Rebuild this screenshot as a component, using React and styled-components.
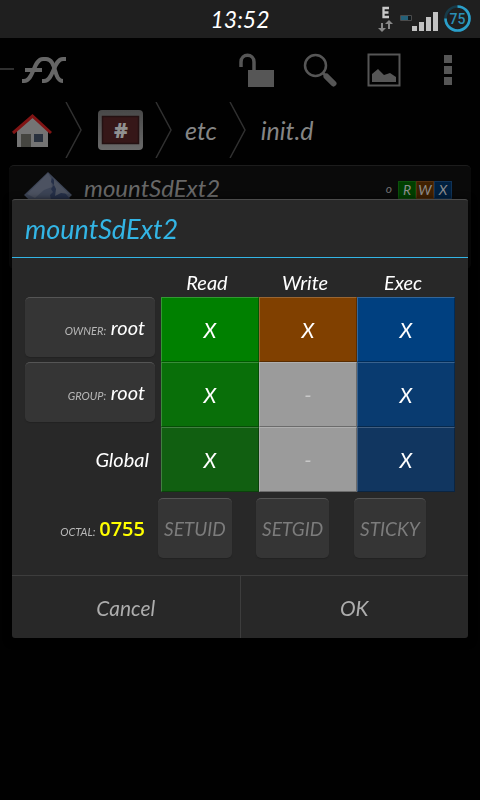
import React, { useState } from 'react';
import styled, { createGlobalStyle } from 'styled-components';

const GlobalStyle = createGlobalStyle`
  * {
    box-sizing: border-box;
  }
  body {
    margin: 0;
    background-color: #010101;
    color: white;
    font-family: Lato, 'Open Sans', sans-serif;
    font-style: italic;
  }
  button {
    margin: 0;
    padding: 0;
    border: 0;
    color: inherit;
    background: none;
    font: inherit;
  }
`;

const StatusBar = styled.header`
  position: relative;
  display: flex;
  align-items: center;
  justify-content: flex-end;
  height: 38px;
  padding-right: 8px;
  background-color: #1f1f1f;
`;

const Clock = styled.time`
  position: absolute;
  left: 0;
  right: 0;
  text-align: center;
  font-size: 23px;
  line-height: 36px;
`;

const Toolbar = styled.nav`
  display: flex;
  align-items: center;
  justify-content: space-between;
  height: 64px;
`;

const Tools = styled.div`
  display: flex;
  align-items: center;
`;

const ToolButton = styled.button`
  display: flex;
  justify-content: center;
  width: 64px;
  color: #565656;
`;

const Breadcrumbs = styled.nav`
  display: flex;
  align-items: center;
  height: 56px;
  padding-left: 12px;
`;

const Crumb = styled.a`
  display: flex;
  justify-content: center;
  padding: 0 ${(props) => props.$gap || 12}px;
  color: #858585;
  font-size: 25px;
  text-decoration: none;
  &:first-child {
    padding-left: 0;
  }
`;

const FileCard = styled.article`
  display: flex;
  align-items: flex-start;
  height: 104px;
  margin: 7px 9px;
  padding: 6px 19px 0 15px;
  border-top: 1px solid #1c1c1c;
  border-radius: 5px;
  background-color: #0a0a0a;
`;

const FileName = styled.span`
  flex: 1;
  padding-left: 12px;
  color: #686868;
  font-size: 24px;
  line-height: 32px;
`;

const FileOwner = styled.span`
  padding-right: 6px;
  color: #707070;
  font-size: 12px;
  line-height: 34px;
`;

const Flag = styled.span`
  width: 18px;
  height: 18px;
  margin-top: 9px;
  border: 1px solid ${(props) => props.$edge};
  background-color: ${(props) => props.$color};
  color: #8c8c8c;
  font-size: 14px;
  line-height: 15px;
  text-align: center;
`;

const ModalLayer = styled.div`
  position: fixed;
  top: 38px;
  right: 0;
  bottom: 0;
  left: 0;
  display: flex;
  align-items: center;
  padding: 0 12px 1px;
`;

const Dialog = styled.section`
  width: 100%;
  border-top: 1px solid #4b4b4b;
  border-radius: 3px;
  background-color: #282828;
  box-shadow: 0 2px 8px black;
`;

const Title = styled.h1`
  margin: 0;
  padding: 0 13px;
  border-bottom: 1px solid #33b5e5;
  color: #33b5e5;
  font-size: 27px;
  font-weight: 400;
  line-height: 57px;
`;

const Permissions = styled.table`
  width: calc(100% - 26px);
  margin: 0 13px;
  border-collapse: collapse;
  table-layout: fixed;
`;

const LabelColumn = styled.col`
  width: 136px;
`;

const Cell = styled.td`
  padding: 0;
`;

const ColumnHead = styled.th`
  height: 39px;
  padding: 8px 6px 0 0;
  font-size: 20px;
  font-weight: 400;
`;

const RowHead = styled.th`
  height: 65px;
  padding: 0;
  font-size: 20px;
  font-weight: 400;
  text-align: right;
  vertical-align: top;
`;

const GlobalLabel = styled.span`
  padding-right: 12px;
  line-height: 65px;
`;

const raised = `
  height: 60px;
  border-top: 1px solid #555;
  border-radius: 5px;
  background-color: #353535;
  box-shadow: 0 1px 1px #222;
`;

const PrincipalButton = styled.button`
  ${raised}
  display: block;
  width: 130px;
  padding: 0 10px 2px 0;
  text-align: right;
`;

const Caption = styled.small`
  color: #b8b8b8;
  font-size: 11px;
`;

const Toggle = styled.button`
  display: block;
  width: 100%;
  height: 65px;
  border: 1px solid;
  border-color: rgba(255, 255, 255, 0.2) rgba(0, 0, 0, 0.3) rgba(0, 0, 0, 0.3)
    rgba(255, 255, 255, 0.2);
  background-color: ${(props) => (props.$on ? props.$color : '#9b9b9b')};
  color: ${(props) => (props.$on ? 'white' : '#c8c8c8')};
  font-size: 21px;
`;

const SpecialRow = styled.div`
  display: grid;
  grid-template-columns: 133px repeat(3, 1fr);
  align-items: center;
  justify-items: start;
  padding: 6px 16px 17px 13px;
`;

const Octal = styled.span`
  justify-self: end;
  padding-right: 13px;
`;

const OctalValue = styled.output`
  color: yellow;
  font-family: 'Open Sans', sans-serif;
  font-size: 20px;
  font-style: normal;
  font-weight: 600;
`;

const SpecialButton = styled.button`
  ${raised}
  padding: 0 6px;
  color: #7c7c7c;
  font-size: 19px;
`;

const Actions = styled.footer`
  display: flex;
  border-top: 1px solid #3d3d3d;
`;

const ActionButton = styled.button`
  flex: 1;
  height: 62px;
  color: #adadad;
  font-size: 21px;
  & + & {
    border-left: 1px solid #3d3d3d;
  }
`;

const StatusIcons = () => (
  <svg width="94" height="36" viewBox="378 1 94 36" aria-hidden="true">
    <path d="M389 8h-5.500v9h5.500M383 12.500h5.500" fill="none" stroke="#c9c9c9" strokeWidth="2.300" />
    <path d="M381 23h2v5h3l-4 4-4-4h3zM388 29h2v-5h3l-4-4-4 4h3z" fill="#888" />
    <path d="M400.500 15.500h11v5h-11z" fill="#10181c" stroke="#4b4b4b" />
    <path d="M401 16h7v4h-7z" fill="#246078" />
    <path d="M412 26h5v5h-5zM419 22h5v9h-5zM426 17h5v14h-5zM433 12h5v19h-5z" fill="#c2c2c2" />
    <circle cx="457.500" cy="18.500" r="12" fill="none" stroke="#173b49" strokeWidth="2.600" />
    <path d="M457.500 6.500a12 12 0 1 1-12 12" fill="none" stroke="#2b9fc9" strokeWidth="2.600" />
    <text x="457.500" y="23.500" textAnchor="middle" fill="#2b8fb5" fontFamily="Roboto" fontStyle="normal" fontWeight="500" fontSize="14">
      75
    </text>
  </svg>
);

const Logo = () => (
  <svg width="68" height="32" viewBox="0 54 68 32" aria-label="FX" fill="none">
    <path d="M0 69h14" stroke="#303030" strokeWidth="2" />
    <g stroke="#666" strokeWidth="4">
      <path d="M22 81h2C34 81 33 59 43 59h3c11 0 7 22 17 22" />
      <path d="M42 81h2c10 0 9-22 19-22h3M25 70h17" />
    </g>
  </svg>
);

const LockIcon = () => (
  <svg width="36" height="36" viewBox="238 52 36 36" aria-hidden="true">
    <path d="M241 67v-5c0-9 13-9 13 0v9" fill="none" stroke="currentColor" strokeWidth="3.500" />
    <path d="M248 70h26v17h-26z" fill="currentColor" />
  </svg>
);

const SearchIcon = () => (
  <svg width="34" height="36" viewBox="303 52 34 36" aria-hidden="true" stroke="currentColor">
    <circle cx="315.500" cy="65.500" r="10.500" fill="none" strokeWidth="2.500" />
    <path d="M323 73l3 3" strokeWidth="3" />
    <path d="M326.500 76.500l7 7" strokeWidth="6" strokeLinecap="round" />
  </svg>
);

const PictureIcon = () => (
  <svg width="34" height="36" viewBox="367 52 34 36" aria-hidden="true">
    <path d="M368.500 54.500h31v31h-31z" fill="none" stroke="currentColor" strokeWidth="2" />
    <path d="M372 82v-8l6-5 6 6 6-2 6 4v5z" fill="currentColor" />
  </svg>
);

const MenuIcon = () => (
  <svg width="8" height="32" viewBox="0 0 8 32" aria-hidden="true">
    <path d="M0 1h8v8H0zM0 12h8v8H0zM0 23h8v8H0z" fill="currentColor" />
  </svg>
);

const HomeIcon = () => (
  <svg width="41" height="36" viewBox="12 112 41 36" aria-hidden="true">
    <path d="M17 130l15-13 16 13v17H17z" fill="#747474" />
    <path d="M13 133l19.500-17L51 133" fill="none" stroke="#811414" strokeWidth="3" />
    <path d="M21 134h10v13H21z" fill="#454540" />
    <path d="M34 134h9v8h-9z" fill="#29313e" />
  </svg>
);

const RootIcon = () => (
  <svg width="48" height="42" viewBox="-3 0 48 42" aria-hidden="true">
    <defs>
      <linearGradient id="frame" x2="0" y2="1">
        <stop stopColor="#484848" />
        <stop offset="1" stopColor="#6a6a6a" />
      </linearGradient>
    </defs>
    <rect y="1" width="45" height="40" rx="4" fill="url(#frame)" />
    <rect x="4.500" y="7.500" width="36" height="27" fill="#361718" stroke="#241112" strokeWidth="1.500" />
    <text x="23" y="29" textAnchor="middle" fill="#909090" fontFamily="Open Sans" fontStyle="normal" fontWeight="800" fontSize="21">
      #
    </text>
  </svg>
);

const Chevron = () => (
  <svg width="18" height="56" viewBox="0 0 18 56" aria-hidden="true">
    <path d="M1 0l15 28L1 56" fill="none" stroke="#303030" strokeWidth="1.500" />
  </svg>
);

const FileIcon = () => (
  <svg width="48" height="48" viewBox="24 172 48 48" aria-hidden="true">
    <path d="M48 172l24 23-24 23-24-23z" fill="#3c4456" />
    <path d="M48 173l-21 21 8 4 9-8 8-3-1-9z" fill="#4c5261" />
    <path d="M52 178l-1 4 3 3-3 4 2 3-3 3 1 5h20z" fill="#252f48" />
    <path d="M54 179l15 15-8-1-6 3 1-7-2-4z" fill="#4a505e" />
  </svg>
);

const groups = ['owner', 'group', 'global'];

const columns = [
  { name: 'Read', value: 4, colors: ['#008000', '#096f09', '#115f11'] },
  { name: 'Write', value: 2, colors: ['#804000', '#703b09', '#603711'] },
  { name: 'Exec', value: 1, colors: ['#004080', '#093b70', '#113660'] },
];

const special = ['SETUID', 'SETGID', 'STICKY'];

const App = () => {
  const [mode, setMode] = useState([7, 5, 5]);

  const toggle = (row, value) =>
    setMode(mode.map((bits, i) => (i === row ? bits ^ value : bits)));

  return (
    <>
      <GlobalStyle />
      <StatusBar>
        <Clock>13:52</Clock>
        <StatusIcons />
      </StatusBar>
      <Toolbar>
        <Logo />
        <Tools>
          <ToolButton aria-label="Unlock"><LockIcon /></ToolButton>
          <ToolButton aria-label="Search"><SearchIcon /></ToolButton>
          <ToolButton aria-label="View"><PictureIcon /></ToolButton>
          <ToolButton aria-label="More"><MenuIcon /></ToolButton>
        </Tools>
      </Toolbar>
      <Breadcrumbs>
        <Crumb href="#home" aria-label="Home"><HomeIcon /></Crumb>
        <Chevron />
        <Crumb href="#root" aria-label="Root"><RootIcon /></Crumb>
        <Chevron />
        <Crumb href="#etc">etc</Crumb>
        <Chevron />
        <Crumb href="#init" $gap={14}>init.d</Crumb>
      </Breadcrumbs>
      <FileCard>
        <FileIcon />
        <FileName>mountSdExt2</FileName>
        <FileOwner>o</FileOwner>
        <Flag $color="#003f00" $edge="#0b500b">R</Flag>
        <Flag $color="#402000" $edge="#553010">W</Flag>
        <Flag $color="#002040" $edge="#103358">X</Flag>
      </FileCard>
      <ModalLayer>
        <Dialog role="dialog" aria-labelledby="title">
          <Title id="title">mountSdExt2</Title>
          <Permissions>
            <colgroup>
              <LabelColumn />
              <col />
              <col />
              <col />
            </colgroup>
            <thead>
              <tr>
                <Cell />
                {columns.map((column) => (
                  <ColumnHead key={column.name} scope="col">{column.name}</ColumnHead>
                ))}
              </tr>
            </thead>
            <tbody>
              {groups.map((group, row) => (
                <tr key={group}>
                  <RowHead scope="row">
                    {group === 'global' ? (
                      <GlobalLabel>Global</GlobalLabel>
                    ) : (
                      <PrincipalButton>
                        <Caption>{group.toUpperCase()}:</Caption> root
                      </PrincipalButton>
                    )}
                  </RowHead>
                  {columns.map(({ name, value, colors }) => {
                    const on = Boolean(mode[row] & value);
                    return (
                      <Cell key={name}>
                        <Toggle
                          $on={on}
                          $color={colors[row]}
                          aria-pressed={on}
                          aria-label={`${group} ${name}`}
                          onClick={() => toggle(row, value)}
                        >
                          {on ? 'X' : '-'}
                        </Toggle>
                      </Cell>
                    );
                  })}
                </tr>
              ))}
            </tbody>
          </Permissions>
          <SpecialRow>
            <Octal>
              <Caption as="label" htmlFor="octal">OCTAL:</Caption>{' '}
              <OctalValue id="octal">0{mode.join('')}</OctalValue>
            </Octal>
            {special.map((name) => (
              <SpecialButton key={name}>{name}</SpecialButton>
            ))}
          </SpecialRow>
          <Actions>
            <ActionButton>Cancel</ActionButton>
            <ActionButton>OK</ActionButton>
          </Actions>
        </Dialog>
      </ModalLayer>
    </>
  );
};

export default App;
